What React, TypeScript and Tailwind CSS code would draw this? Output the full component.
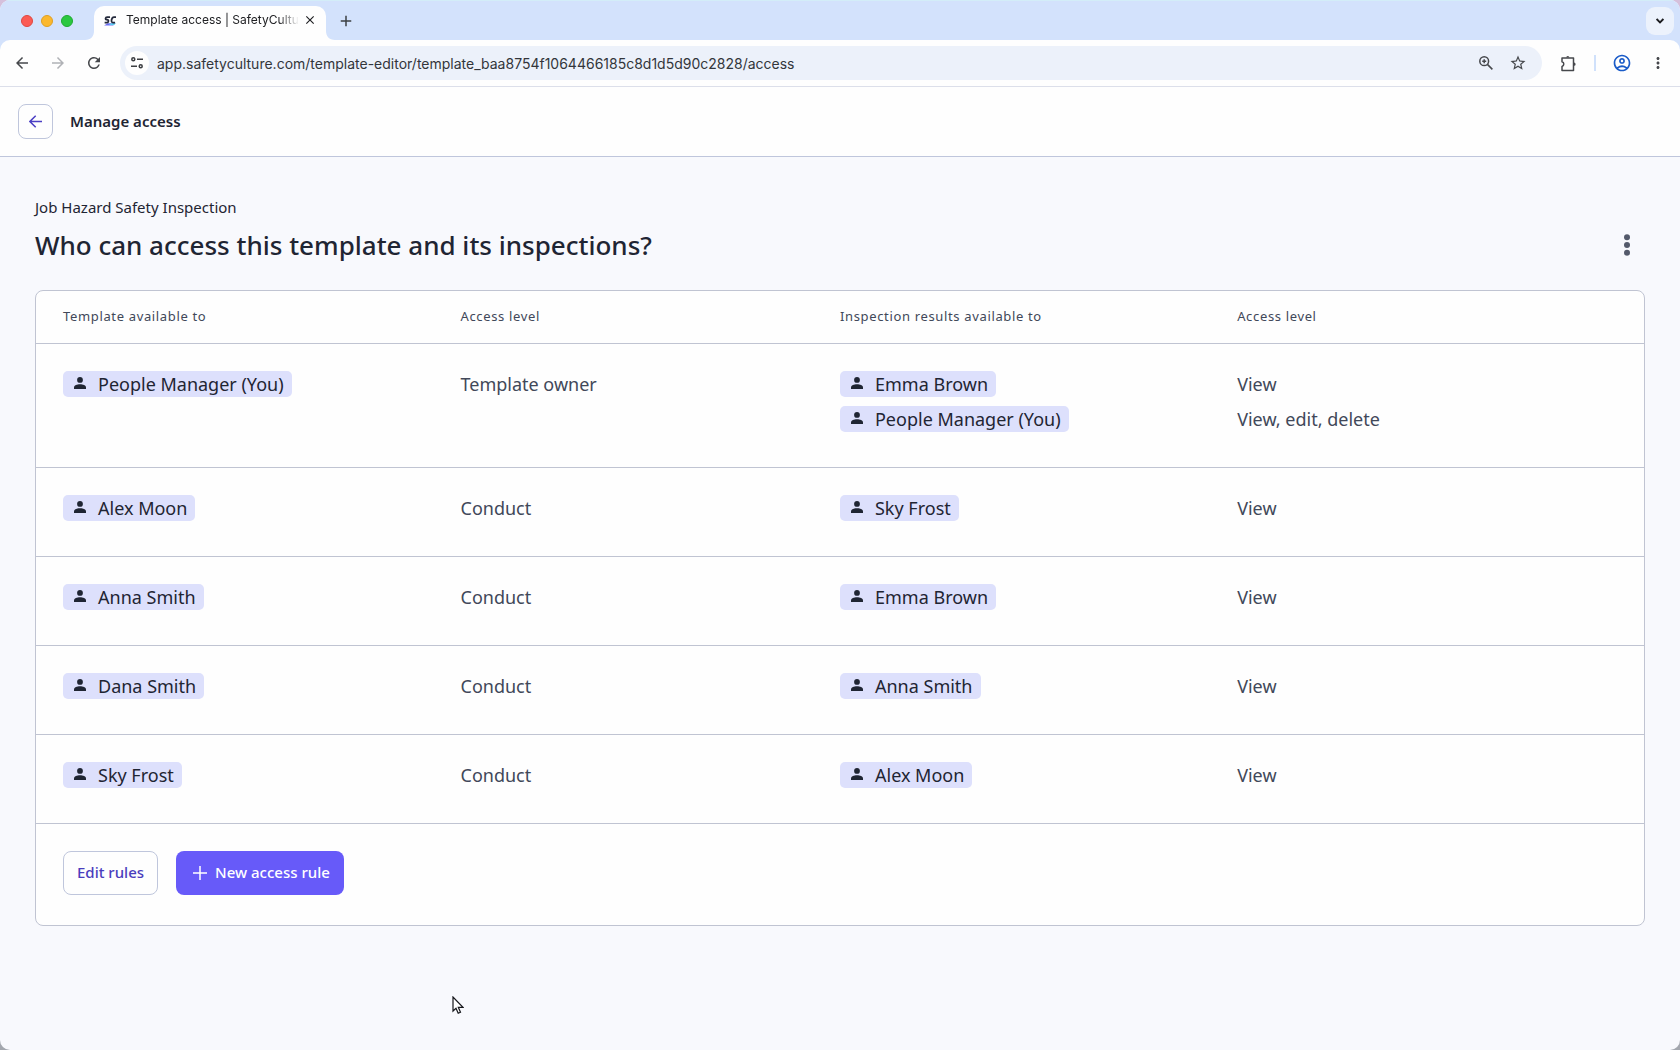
import React from 'react';
import {
  MdArrowBack,
  MdArrowForward,
  MdRefresh,
  MdClose,
  MdAdd,
  MdMoreVert,
  MdStarBorder,
  MdOutlineAccountCircle,
} from 'react-icons/md';

interface Grant {
  name: string;
  level: string;
}

interface Rule {
  holder: Grant;
  results: Grant[];
}

const rules: Rule[] = [
  {
    holder: { name: 'People Manager (You)', level: 'Template owner' },
    results: [
      { name: 'Emma Brown', level: 'View' },
      { name: 'People Manager (You)', level: 'View, edit, delete' },
    ],
  },
  { holder: { name: 'Alex Moon', level: 'Conduct' }, results: [{ name: 'Sky Frost', level: 'View' }] },
  { holder: { name: 'Anna Smith', level: 'Conduct' }, results: [{ name: 'Emma Brown', level: 'View' }] },
  { holder: { name: 'Dana Smith', level: 'Conduct' }, results: [{ name: 'Anna Smith', level: 'View' }] },
  { holder: { name: 'Sky Frost', level: 'Conduct' }, results: [{ name: 'Alex Moon', level: 'View' }] },
];

function Chip({ name }: { name: string }) {
  return (
    <span className="flex w-fit items-center h-[26px] pl-[11px] pr-2 gap-3 rounded-[5px] bg-[#dde0fc] text-[#1f2533]">
      <svg viewBox="0 0 12 12" className="w-3 h-3 mb-[2px]" fill="currentColor">
        <circle cx="6" cy="2.9" r="2.9" />
        <path d="M0 12v-1.6C0 8.2 3 7.2 6 7.2s6 1 6 3.2V12z" />
      </svg>
      {name}
    </span>
  );
}

function BrowserChrome() {
  return (
    <div className="font-[Inter,sans-serif]">
      <div className="h-10 flex items-end bg-[#d3e2fc] border-t border-[#d3edf8]">
        <div className="flex items-center gap-2 h-full pl-[21px] w-[85px]">
          <span className="w-3 h-3 rounded-full bg-[#fb5b54] border border-[#df4740]" />
          <span className="w-3 h-3 rounded-full bg-[#fbb82e] border border-[#dfa023]" />
          <span className="w-3 h-3 rounded-full bg-[#2bc840] border border-[#1faa30]" />
        </div>
        <svg className="w-[9px] h-[9px]" viewBox="0 0 9 9" fill="#fefefe">
          <path d="M9 0v9H0C6 9 9 5 9 0z" />
        </svg>
        <div className="w-[232px] h-[34px] rounded-t-[10px] bg-[#fefefe] flex items-center pl-[10px] pr-[9px] pb-[6px]">
          <svg viewBox="0 0 14 12" className="w-[13px] h-[11px] flex-shrink-0">
            <path d="M0 11.5L4 9h8l-2 2.500z" fill="#6b6bf5" />
            <path d="M5 11l3-2h5l-2 2z" fill="#5ad0f0" />
            <path
              d="M6.5 2.2H3.2Q1.800 2.200 1.600 3.600t1.600 1.500 1.500 1.700T3 8.200H.6M13 2.200h-2.200Q8.800 2.200 8.200 5.200T9.800 8.200H12"
              fill="none"
              stroke="#262b3d"
              strokeWidth="1.9"
            />
          </svg>
          <span className="ml-[9px] whitespace-nowrap text-[12px] text-[#202124] [mask-image:linear-gradient(to_right,black_88%,transparent)]">
            Template access | SafetyCultu
          </span>
          <button aria-label="Close tab" className="ml-auto text-[#202124]">
            <MdClose className="w-[14px] h-[14px]" />
          </button>
        </div>
        <svg className="w-[9px] h-[9px]" viewBox="0 0 9 9" fill="#fefefe">
          <path d="M0 0v9h9C3 9 0 5 0 0z" />
        </svg>
        <button aria-label="New tab" className="self-center ml-[2px] text-[#3c4043]">
          <MdAdd className="w-[18px] h-[18px]" />
        </button>
        <button
          aria-label="Search tabs"
          className="self-center ml-auto mr-[6px] w-7 h-7 rounded-[9px] bg-[#ecf2fc] flex items-center justify-center text-[#1c1d20]"
        >
          <svg viewBox="0 0 8 6" className="w-2 h-[6px]" fill="none" stroke="currentColor" strokeWidth="1.9">
            <path d="M.6 1L4 4.400 7.400 1" />
          </svg>
        </button>
      </div>

      <div className="bg-[#d3e2fc]">
        <div className="h-[47px] rounded-t-[10px] bg-[#fefefe] border-b border-[#dcdfea] flex items-center text-[#46484c]">
          <button aria-label="Back" className="ml-[13px]"><MdArrowBack className="w-[18px] h-[18px]" /></button>
          <button aria-label="Forward" className="ml-[18px] text-[#b0b2b6]"><MdArrowForward className="w-[18px] h-[18px]" /></button>
          <button aria-label="Reload" className="ml-[18px]"><MdRefresh className="w-[18px] h-[18px]" /></button>
          <div className="ml-[17px] flex-1 h-[34px] rounded-full bg-[#ecf1fa] flex items-center pl-[5px] pr-[15px]">
            <button aria-label="Site information" className="w-6 h-6 rounded-full bg-[#fefefe] flex items-center justify-center text-[#3c3e42]">
              <svg viewBox="0 0 12 12" className="w-3 h-3" fill="none" stroke="currentColor" strokeWidth="1.5">
                <circle cx="2.3" cy="2.3" r="1.5" />
                <path d="M6 2.300h6M0 9.300h6" />
                <circle cx="9.7" cy="9.3" r="1.5" />
              </svg>
            </button>
            <input
              aria-label="Address"
              readOnly
              value="app.safetyculture.com/template-editor/template_baa8754f1064466185c8d1d5d90c2828/access"
              className="flex-1 ml-2 bg-transparent outline-none text-[14px] text-[#33363b]"
            />
            <button aria-label="Zoom">
              <svg viewBox="0 0 14 14" className="w-[14px] h-[14px]" fill="none" stroke="currentColor" strokeWidth="1.5">
                <circle cx="5.2" cy="5.2" r="4.4" />
                <path d="M8.400 8.400L13.400 13.400M5.200 3.200v4M3.200 5.200h4" />
              </svg>
            </button>
            <button aria-label="Bookmark" className="ml-4"><MdStarBorder className="w-[18px] h-[18px]" /></button>
          </div>
          <button aria-label="Extensions" className="ml-[18px]">
            <svg viewBox="0 0 17 17" className="w-[17px] h-[17px]" fill="none" stroke="currentColor" strokeWidth="1.5" strokeLinejoin="round">
              <path d="M2 3h11.500v12.500H2v-4a2.500 2.500 0 0 0 0-4.800z" />
              <path d="M6.200 2.500a1.600 1.600 0 0 1 3.200 0zM14 7.600a1.600 1.600 0 0 1 0 3.200z" fill="currentColor" stroke="none" />
            </svg>
          </button>
          <span className="ml-[17px] w-[2px] h-4 bg-[#d0e1fb]" />
          <button aria-label="Profile" className="ml-[16px] text-[#1a5bc8]"><MdOutlineAccountCircle className="w-5 h-5" /></button>
          <button aria-label="Browser menu" className="ml-[17px] mr-[13px]"><MdMoreVert className="w-[18px] h-[18px]" /></button>
        </div>
      </div>
    </div>
  );
}

function AccessTable() {
  return (
    <table className="w-full table-fixed text-left text-[18px] leading-[26px] text-[#414859]">
      <thead>
        <tr className="h-[52px] border-b border-[#c0c4d2] text-[13px] tracking-wider">
          <th className="w-[26.4%] pl-[27px] pb-px font-normal">Template available to</th>
          <th className="w-[23.6%] pb-px font-normal">Access level</th>
          <th className="w-[24.7%] pb-px font-normal">Inspection results available to</th>
          <th className="pb-px font-normal">Access level</th>
        </tr>
      </thead>
      <tbody>
        {rules.map((rule) => (
          <tr key={rule.holder.name} className="border-b border-[#c0c4d2] align-top">
            <td className="pl-[27px] pt-[27px] pb-[35px]">
              <Chip name={rule.holder.name} />
            </td>
            <td className="pt-[27px]">{rule.holder.level}</td>
            <td className="pt-[27px] pb-[35px]">
              <div className="flex flex-col gap-[9px]">
                {rule.results.map((r) => <Chip key={r.name} name={r.name} />)}
              </div>
            </td>
            <td className="pt-[27px]">
              <div className="flex flex-col gap-[9px]">
                {rule.results.map((r) => <span key={r.name}>{r.level}</span>)}
              </div>
            </td>
          </tr>
        ))}
      </tbody>
    </table>
  );
}

export default function App() {
  return (
    <div className="bg-linear-to-b from-[#d5c0dc] to-[#a3a7ae]">
      <div className="min-h-screen flex flex-col overflow-hidden rounded-[10px] bg-[#f8f9fd] font-['Noto_Sans',sans-serif] text-[#1f2533]">
        <BrowserChrome />

        <header className="h-[70px] bg-[#fefefe] border-b border-[#bfc6dc] flex items-center gap-[17px] px-[18px]">
          <button aria-label="Back" className="w-[35px] h-[35px] rounded-lg border border-[#bfc6dc] flex items-center justify-center text-[#4b3fc4]">
            <svg viewBox="0 0 13 13" className="w-[13px] h-[13px]" fill="none" stroke="currentColor" strokeWidth="1.5">
              <path d="M13 6.500H1M6.700.7L.9 6.500l5.800 5.800" />
            </svg>
          </button>
          <h1 className="text-[15px] font-semibold">Manage access</h1>
        </header>

        <main className="px-[35px] pt-[38px]">
          <p className="text-[15px] leading-6">Job Hazard Safety Inspection</p>
          <div className="flex items-center justify-between mt-[6px]">
            <h2 className="text-[26px] leading-10 font-medium">Who can access this template and its inspections?</h2>
            <button aria-label="More options" className="mr-[15px] text-[#545a6b]">
              <svg viewBox="0 0 6 22" className="w-[6px] h-[22px]" fill="currentColor">
                <circle cx="3" cy="3.2" r="3" />
                <circle cx="3" cy="11" r="3" />
                <circle cx="3" cy="18.8" r="3" />
              </svg>
            </button>
          </div>

          <section className="mt-[25px] bg-[#fefefe] border border-[#c0c4d2] rounded-lg">
            <AccessTable />
            <div className="flex gap-[18px] pl-[27px] pt-[27px] pb-[30px] text-[15px] font-medium">
              <button className="h-11 px-[13px] rounded-lg border border-[#bfc6dc] text-[#4a3dbd]">Edit rules</button>
              <button className="h-11 pl-[17px] pr-[14px] rounded-lg bg-[#675af9] text-white flex items-center gap-2">
                <svg viewBox="0 0 14 14" className="w-[14px] h-[14px]" stroke="currentColor" strokeWidth="1.5">
                  <path d="M7 0v14M0 7h14" />
                </svg>
                New access rule
              </button>
            </div>
          </section>
        </main>
      </div>

      {/* mouse pointer */}
      <svg viewBox="0 0 12 19" className="absolute left-[452px] top-[996px] w-3 h-[19px]">
        <path d="M1 1v14l3-2.800 2.200 5 2.300-1-2.200-4.900H11z" fill="#fff" stroke="#16171c" strokeWidth="1.2" />
      </svg>
    </div>
  );
}
